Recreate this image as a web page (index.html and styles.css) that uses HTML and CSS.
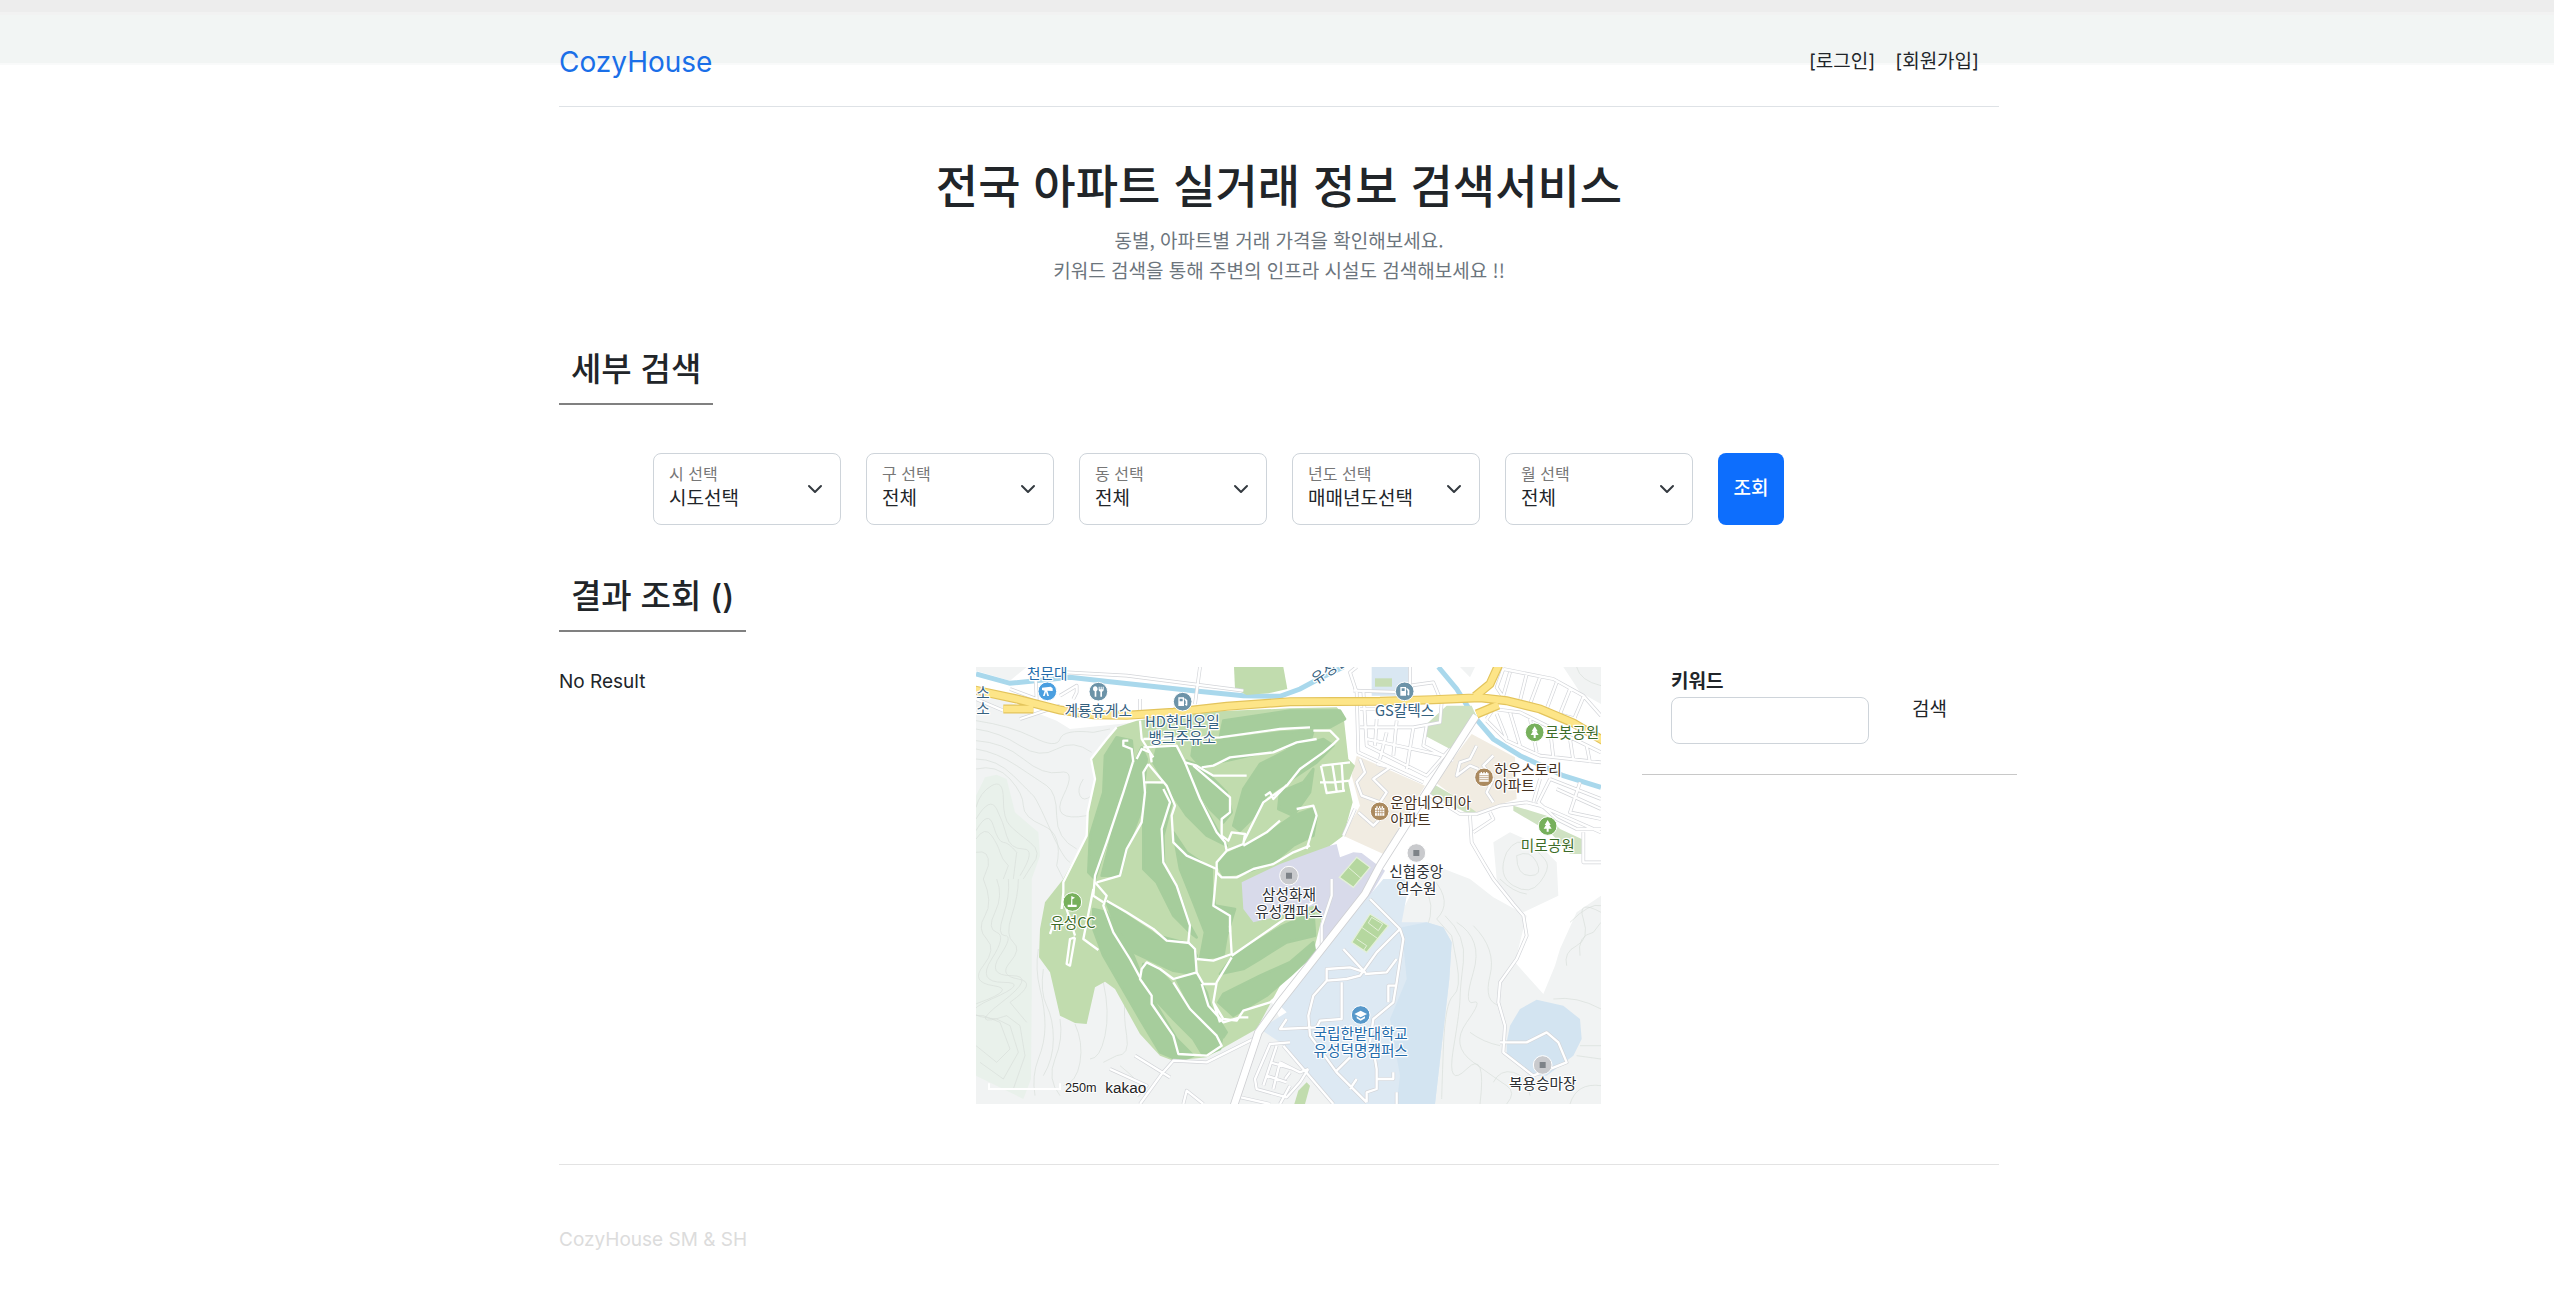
FILE: index.html
```html
<!DOCTYPE html>
<html lang="ko">
<head>
<meta charset="utf-8">
<meta name="viewport" content="width=device-width, initial-scale=1">
<title>CozyHouse</title>
<link rel="stylesheet" href="styles.css">
</head>
<body>
<div class="container">
  <header class="site-header">
    <a class="brand" href="#">CozyHouse</a>
    <nav class="site-nav">
      <a href="#">[로그인]</a>
      <a href="#">[회원가입]</a>
    </nav>
  </header>

  <section class="intro">
    <h1>전국 아파트 실거래 정보 검색서비스</h1>
    <p>동별, 아파트별 거래 가격을 확인해보세요.<br>키워드 검색을 통해 주변의 인프라 시설도 검색해보세요 !!</p>
  </section>

  <main>
    <h2 class="section-title">세부 검색</h2>
    <form class="filters">
      <div class="field"><label for="sido">시 선택</label><select id="sido"><option>시도선택</option></select></div>
      <div class="field"><label for="gugun">구 선택</label><select id="gugun"><option>전체</option></select></div>
      <div class="field"><label for="dong">동 선택</label><select id="dong"><option>전체</option></select></div>
      <div class="field"><label for="year">년도 선택</label><select id="year"><option>매매년도선택</option></select></div>
      <div class="field"><label for="month">월 선택</label><select id="month"><option>전체</option></select></div>
      <button class="btn-primary" type="button">조회</button>
    </form>

    <h2 class="section-title">결과 조회 ()</h2>
    <div class="results">
      <p class="result-list">No Result</p>

      <svg class="map" viewBox="48 54 1875 1311" role="img" aria-label="지도">
        <rect x="48" y="54" width="1875" height="1311" fill="#f1f3f3"/>
        <path fill="#e9f1eb" d="M48 440L75 385L110 377L140 390L165 490L235 550L240 620L215 690L215 1050L213 1290L190 1350L48 1280Z"/>
        <path fill="#fff" d="M48 54H1923V740L1850 790L1800 900L1785 950L1750 1035L1665 940L1700 800L1600 745L1530 690L1400 640L1330 780L960 1110L530 220L330 240L290 215L48 120Z"/>
        <path fill="#f1f3f3" d="M48 54H200L150 95L48 65ZM1500 54H1545L1530 85ZM1810 54H1923V165L1860 130ZM1600 580L1650 550L1740 590L1790 640L1795 740L1690 790L1640 750L1610 690Z"/>

        <g class="contour">
          <path d="M48 215Q150 230 220 265T300 270T400 250L450 240M48 240Q120 250 180 290T290 300T395 310M48 275Q130 280 190 330T300 370T310 440T380 500M48 300Q110 310 170 350T260 410T290 500T350 600M48 330Q110 330 160 380T220 440T270 540T330 640M48 360Q110 345 150 390T190 470T250 530T290 650L310 690M48 475Q60 430 95 410T130 450T150 530T210 580T215 650L190 690M48 510Q90 440 110 480T140 560T190 600T180 680M48 545Q85 480 100 530T130 580T170 610L160 690M48 570Q75 530 95 560T120 610T145 650L130 690M48 610Q90 600 85 650L70 690M370 390Q350 420 360 440T395 440"/>
          <path d="M70 690Q100 760 75 800T80 870T70 950T100 1010T60 1060T70 1100L120 1120L150 1200L110 1240L48 1190M110 690Q130 740 105 790T110 850T95 930T130 1000T95 1050T110 1110L150 1130L175 1210L130 1290L60 1240M145 690Q150 740 130 800T135 860T120 920T155 980T125 1060T140 1100L180 1130L195 1220L160 1320M175 690Q175 740 155 800T160 880T150 940T175 990T150 1060L200 1120M235 900Q225 960 240 1020T255 1130T235 1230T225 1340M250 960Q240 1030 260 1070T280 1170T250 1280M300 1110Q310 1170 285 1230T300 1340M345 1125Q370 1180 360 1240T310 1310M430 1000Q450 1090 435 1160T390 1230M495 1050Q490 1100 500 1160T470 1220L430 1240M480 1250Q530 1290 560 1330"/>
          <path d="M1390 715Q1430 760 1400 840M1420 690Q1480 760 1430 810L1475 860T1490 940T1480 1040T1450 1200T1445 1350M1455 800Q1520 860 1510 940T1500 1050T1480 1200T1520 1260T1560 1365M1490 820Q1570 870 1540 970T1540 1060T1520 1120T1540 1240T1640 1310T1640 1365M1540 830Q1610 900 1590 980T1620 1070M1530 1150Q1570 1180 1620 1190M1600 1300Q1620 1260 1660 1270T1710 1340M1830 820Q1890 760 1923 770M1820 950Q1810 910 1850 890T1870 810T1923 790M1860 920Q1850 860 1900 850L1923 820M1780 1050Q1850 1040 1923 1080M1860 1190L1923 1190M1850 1220L1923 1230M1640 610Q1670 560 1710 590T1760 640T1740 700T1660 710T1640 610M1670 620Q1710 600 1730 640T1710 680T1670 620M1850 54Q1860 95 1923 110M1620 690Q1660 730 1700 735M1830 1365Q1850 1300 1923 1310"/>
        </g>

        <!-- water -->
        <g class="river">
          <path d="M48 75L150 103L330 85L450 98L700 125L850 140L960 142L1020 120L1080 88L1150 54"/>
          <path d="M1435 54L1490 120L1540 200L1600 270L1680 320L1810 380L1923 415"/>
        </g>

        <!-- land use -->
        <path fill="#c1dcae" d="M822 54H970L982 120L925 133L860 138L825 120Z"/>
        <path fill="#d9e7f2" d="M1235 54H1350V140H1235Z"/>
        <path fill="#c7ddb5" d="M1245 88H1296V113H1245Z"/>
        <path fill="#cfe2c2" d="M1460 170H1535L1550 205L1470 300L1395 260L1400 225ZM1420 405L1560 485L1530 497L1400 430ZM1660 470L1760 500L1800 540L1865 570L1865 615H1830L1770 550L1660 485Z"/>
        <path fill="#f1ece2" d="M1190 320L1395 410L1340 500L1270 615L1150 560L1200 470L1175 380ZM1535 255L1665 325L1670 450L1550 490L1425 400Z"/>
        <path fill="#c1dcae" d="M530 215L700 190L990 178L1130 175L1150 195L1165 330L1185 350L1165 400L1178 460L1150 560L1110 590L1090 790L1065 890L960 1010L890 1140L740 1225L640 1235L600 1220L540 1155L465 1020L435 998L405 1015L380 1125L345 1122L300 1100L270 970L237 925L240 840L255 760L310 690L380 560L383 490L405 390L390 330L440 270L470 235Z"/>
        <g class="fairway">
          <path d="M470 265L515 275L520 330L480 430L440 580L405 690L385 670L390 560L430 430L435 320Z"/>
          <path d="M545 295L560 330L545 480L500 600L480 680H425L450 580L490 420Z"/>
          <path d="M565 405L610 410L635 460L610 560L612 650L650 710L690 830L710 865L690 850L640 800L590 700L550 660L550 520Z"/>
          <path d="M590 300L640 290L670 340L710 430L770 540L800 590L740 560L680 500L640 440L580 340Z"/>
          <path d="M680 335L720 350L800 430L815 490L790 520L750 480L710 420Z"/>
          <path d="M790 215L990 185L1140 185L1155 210L1110 235L960 240L780 262Z"/>
          <path d="M700 285L800 270L960 250L1060 245L1050 280L960 300L800 335L720 350L695 320Z"/>
          <path d="M990 300L900 345L850 420L820 530L840 545L875 510L920 440L980 400L1070 340L1120 290L1090 270Z"/>
          <path d="M960 430L1030 400L1060 360L1050 430L1000 500L955 480ZM790 620L900 570L1000 500L1055 480L1070 500L1060 560L1000 590L940 640L860 670L790 680L775 650Z"/>
          <path d="M640 550L680 610L755 660V720L765 770L825 780L800 860L790 920L720 930L735 850L700 760L660 660Z"/>
          <path d="M400 780L440 790L520 920L560 1020L650 1170L700 1220L660 1235L600 1210L540 1110L430 920L400 840Z"/>
          <path d="M440 760L500 800L590 860L690 885L710 920L700 975L640 965L520 910L470 840Z"/>
          <path d="M550 945L590 955L640 1010L700 1090L785 1170L780 1200L730 1220L700 1170L640 1110L575 1040L545 980Z"/>
          <path d="M650 990L710 980L740 1030L750 1070L800 1150L790 1165L740 1130L690 1070Z"/>
          <path d="M780 975L820 920L960 835L1060 790L1065 860L980 880L900 930L850 960ZM790 1035L900 980L990 940L1060 880L1065 910L990 980L920 1040L820 1100L775 1060Z"/>
        </g>
        <path fill="#d8daea" d="M1110 590L1130 585L1140 625L1180 610L1205 612L1275 665L1230 740L1090 890L1085 800L1060 770L960 800L880 820L850 780L845 700L960 645Z"/>
        <path fill="#dde9f3" d="M1270 690H1350L1325 820L1400 820L1450 835L1475 880L1468 990L1445 1190L1425 1365H1120L960 1180L900 1140L980 1090L960 1070L1160 820Z"/>
        <path fill="#d3e4f1" d="M1325 835L1400 820L1450 835L1475 880L1468 990L1445 1190L1425 1365H1310L1320 1280L1290 1110L1340 990ZM1640 1180L1650 1130L1680 1080L1730 1052L1810 1070L1860 1110L1865 1170L1840 1220L1760 1280H1710L1640 1220Z"/>
        <path fill="#b5d79f" stroke="#e3f0d8" stroke-width="4" d="M1190 625L1230 655L1180 715L1138 685ZM1230 795L1285 830L1220 910L1175 880Z"/>
        <path fill="none" stroke="#e3f0d8" stroke-width="3" d="M1165 655L1205 690M1205 835L1255 870M1235 805L1268 825L1255 845L1225 822ZM1190 870L1220 890L1210 905"/>
        <path fill="#c1dcae" d="M1040 1300L1050 1310L1035 1365H1003L1015 1325Z"/>

        <!-- golf course paths -->
        <g class="trail">
          <path d="M470 235L440 270L393 330L405 390L383 490L380 560L310 700V730L305 780"/>
          <path d="M520 340L515 300L490 290V275H505M540 215L545 270L570 310L575 340M530 330L545 300L570 310L580 325M550 270L780 265L960 240L1050 235M550 295L650 290L675 340L710 350L760 380H860M520 335L490 430L440 580L405 680L400 740L430 760M565 345L550 370L555 430L545 520L500 600L480 680L410 700M555 400H610M565 345L620 410L645 470L635 500L640 580L680 620L770 660L760 770L810 800V850M610 420L630 460L605 540L610 640L650 710L690 830L685 880L705 900L710 970L640 990L600 960L560 940L545 960L540 990L575 1040V1065L640 1160L655 1215L740 1220L785 1190L770 1160L690 1080L640 1000"/>
          <path d="M675 340L720 450L770 550L795 580L800 605L770 640V670L785 685H830L880 660L940 645L1000 610L1050 590M700 350L770 410L810 445V490L785 510V560L805 575L815 550L855 555L850 585L800 605M725 355L760 350L810 325L940 310L1010 280L1070 270M850 580L910 460L980 410L1020 360L1090 310L1120 285L1135 270L1110 245L1060 245M850 590L920 550L960 515M915 440L930 430L940 450L980 408"/>
          <path d="M405 700L440 740L430 770L460 850L510 930L540 985M440 755L500 790L580 840L620 875L690 882M400 720L370 870L415 903M345 865L330 950L320 945L330 870L345 865M345 860L310 750M270 855L290 800M815 920L960 820L1060 760M710 930L760 935L815 915L810 830M815 925L770 1000L760 1060L780 1120M710 970L730 1005H770M725 1005L745 1070L790 1120L840 1105H865M760 1060L790 1110L830 1115L850 1085L930 1060L990 1010L1080 900"/>
          <path d="M1080 400L1120 400L1170 395M1085 350L1170 340M1083 350L1100 432L1155 425M1117 345L1130 428M1145 342L1150 425M1010 480L1060 470L1070 500L1040 600"/>
        </g>

        <!-- streets -->
        <g class="casing">
          <path id="st1" d="M150 120L230 150L225 54M180 210L300 170M48 150L130 185M720 54L705 165M320 70L500 80L850 125M300 140L350 110V130L340 150M540 150V200"/>
          <path id="st2" d="M1190 54L1170 70L1190 130L1195 310L1390 400M1210 125L1220 290L1400 380L1470 300M1180 125L1350 130M1350 54V110L1420 100L1445 160L1440 220L1360 235L1200 235M1250 210L1245 290M1310 215L1300 320M1400 230L1390 290L1480 335M1360 235L1340 360M1220 270L1450 320M1280 250L1260 330M1200 180H1260"/>
          <path id="st3" d="M1630 60L1610 115L1640 160L1740 180L1850 210M1630 60L1780 90L1870 140L1923 200M1580 210L1600 180L1680 190L1780 240L1923 310M1580 215L1640 275L1740 320L1923 340M1650 70L1630 140M1700 75L1680 155M1740 85L1710 165M1790 100L1760 180M1830 120L1800 195M1870 145L1840 215M1610 195L1640 270M1650 190L1680 290M1710 210L1730 310M1770 240L1780 325M1830 270L1840 335M1880 290L1890 340M1770 390L1735 460L1790 510L1850 540H1923M1770 390L1923 450M1790 420L1923 480M1860 400L1830 490L1923 510M1740 470L1923 550M1870 550V640H1923M1740 390L1720 460"/>
          <path id="st4" d="M1395 430L1500 495L1550 495L1620 470L1700 460L1740 470M1530 500L1535 580L1570 640L1600 690L1660 765L1690 800L1700 860L1670 930L1620 1000L1615 1060L1635 1130L1630 1210L1720 1280L1820 1240L1795 1180L1760 1150L1700 1180H1620M1540 550L1600 510L1590 490"/>
          <path id="st5" d="M1200 330L1215 370L1190 400L1205 440L1260 460L1280 430L1240 390L1290 355L1250 345M1185 480L1150 560M1195 490L1240 530L1270 500M1550 290L1530 330L1500 340L1490 380L1530 350L1555 360M1600 320L1570 350L1600 390L1580 430L1600 460"/>
          <path id="st6" d="M1230 750L1320 840L1330 870L1310 1000L1300 1060L1240 1110L1230 1180M1320 840L1250 910L1200 980L1160 990L1100 995L1060 1040L1045 1100L1050 1160L1130 1270L1220 1360M1100 995V960L1170 955L1215 970L1150 900M1215 975L1280 970L1310 930M1145 1000V1110L1080 1115L1070 1135L960 1140L980 1110M1310 1010H1285V1060M1240 1200L1250 1260V1320L1220 1330V1360M1250 1290H1300V1270M1310 1330V1365M1130 1265L1170 1225M1170 1320L1190 1290M970 1190L1120 1365M1115 690V740L1085 830L1085 900"/>
          <path id="st7" d="M890 1165L830 1195L740 1240L640 1235L605 1275L540 1365M525 1220L630 1285M450 1260L560 1310L530 1340M990 1180L930 1185L885 1290L890 1320L980 1345L1020 1300L1045 1260M950 1190L910 1310M930 1240L1000 1260M920 1280L980 1300M960 1240L940 1320M670 1365L680 1325L730 1365M820 1340L930 1365M960 1240L1020 1270L1045 1260M990 1310L960 1365M990 1270L975 1290"/>
        </g>
        <g class="street">
          <use href="#st1"/><use href="#st2"/><use href="#st3"/><use href="#st4"/><use href="#st5"/><use href="#st6"/><use href="#st7"/>
        </g>
        <path class="avenue-edge" d="M1548 200L1400 430L1260 650L1215 735L960 1060L895 1150L820 1375"/>
        <path class="avenue" d="M1548 200L1400 430L1260 650L1215 735L960 1060L895 1150L820 1375"/>
        <g class="highway-edge"><path id="hw" d="M40 122L170 150L300 183L400 197L500 199L640 190L800 172L990 158L1260 157L1420 152L1560 146L1640 155L1740 180L1840 222L1930 275M130 180H220M1616 48L1590 105L1545 142M1615 168L1550 195"/></g>
        <g class="highway"><use href="#hw"/></g>

        <!-- places -->
        <g class="pin">
          <circle cx="262" cy="127" r="28" fill="#4a9fe0"/>
          <circle cx="415" cy="128" r="28" fill="#6c93a8"/>
          <circle cx="668" cy="158" r="28" fill="#6c93a8"/>
          <circle cx="1334" cy="127" r="28" fill="#6c93a8"/>
          <circle cx="1724" cy="250" r="28" fill="#77b05c"/>
          <circle cx="1763" cy="531" r="28" fill="#77b05c"/>
          <circle cx="337" cy="759" r="28" fill="#77b05c"/>
          <circle cx="1572" cy="385" r="28" fill="#ab8a5f"/>
          <circle cx="1259" cy="487" r="28" fill="#ab8a5f"/>
          <circle cx="1369" cy="612" r="28" fill="#c9cacd"/>
          <circle cx="987" cy="680" r="28" fill="#c9cacd"/>
          <circle cx="1748" cy="1248" r="28" fill="#c9cacd"/>
          <circle cx="1202" cy="1098" r="28" fill="#5798ca"/>
        </g>
        <g fill="#fff">
          <path d="M246 116L272 113L278 118V126L262 125L267 141H262L258 128L254 141H249L254 125L246 123Z"/>
          <path d="M399 121a7 8 0 1 1 10 6V143H404V127Q399 126 399 121ZM416 113H419V121H422V113H425V121H428V113H431V123Q431 127 426 128V143H421V128Q416 127 416 123Z"/>
          <path id="fuel" fill-rule="evenodd" d="M655 145H672V171H655ZM659 149V157H668V149ZM674 147L682 154V168Q682 171 678 170L674 165H677V157L673 151Z"/>
          <use href="#fuel" x="666" y="-31"/>
          <path id="tree" d="M1724 232L1733 247H1729L1736 258H1727V267H1721V258H1712L1719 247H1715Z"/>
          <use href="#tree" x="39" y="281"/>
          <path d="M334 741L345 746L337 751V767H350V774H323V767H333Z"/>
          <path d="M1558 373H1586V398H1558ZM1562 369H1566V373H1562ZM1570 369H1574V373H1570ZM1578 369H1582V373H1578Z"/>
          <path d="M1245 477H1273V500H1245ZM1249 472H1253V477H1249ZM1257 472H1261V477H1257ZM1265 472H1269V477H1265Z"/>
          <path d="M1202 1085L1221 1095L1202 1105L1183 1095ZM1190 1102L1202 1109L1215 1102V1108L1202 1115L1190 1108Z"/>
        </g>
        <path fill="none" stroke="#ab8a5f" stroke-width="2" d="M1558 380H1586M1558 386H1586M1558 392H1586M1245 484H1273M1245 491H1273M1252 477V500M1259 477V500M1266 477V500"/>
        <path fill="#7e8388" d="M1360 603H1378V621H1360ZM978 671H996V689H978ZM1739 1239H1757V1257H1739Z"/>

        <g class="place">
          <g class="place-service">
            <text x="49" y="146">소</text>
            <text x="49" y="194">소</text>
            <text x="415" y="202" text-anchor="middle">계룡휴게소</text>
            <text x="667" y="233" text-anchor="middle">HD현대오일</text>
            <text x="667" y="281" text-anchor="middle">뱅크주유소</text>
            <text x="1334" y="200" text-anchor="middle">GS칼텍스</text>
            <text x="1067" y="107" transform="rotate(-33 1067 107)">유성천</text>
          </g>
          <g class="place-school">
            <text x="262" y="91" text-anchor="middle">천문대</text>
            <text x="1202" y="1170" text-anchor="middle">국립한밭대학교</text>
            <text x="1202" y="1220" text-anchor="middle">유성덕명캠퍼스</text>
          </g>
          <g class="place-park">
            <text x="1756" y="266">로봇공원</text>
            <text x="1763" y="606" text-anchor="middle">미로공원</text>
            <text x="339" y="836" text-anchor="middle">유성CC</text>
          </g>
          <g class="place-home">
            <text x="1603" y="378">하우스토리</text>
            <text x="1603" y="426">아파트</text>
            <text x="1291" y="478">운암네오미아</text>
            <text x="1291" y="527">아파트</text>
          </g>
          <g class="place-etc">
            <text x="1369" y="685" text-anchor="middle">신협중앙</text>
            <text x="1369" y="735" text-anchor="middle">연수원</text>
            <text x="987" y="753" text-anchor="middle">삼성화재</text>
            <text x="987" y="803" text-anchor="middle">유성캠퍼스</text>
            <text x="1748" y="1320" text-anchor="middle">복용승마장</text>
          </g>
        </g>
        <path fill="none" stroke="#fff" stroke-width="6" d="M87 1303V1320H300V1303"/>
        <text class="scale-text" x="315" y="1329">250m</text>
        <text class="kakao-text" x="436" y="1331">kakao</text>
      </svg>

      <form class="keyword">
        <div class="keyword-field">
          <label for="keyword">키워드</label>
          <input id="keyword" type="text">
        </div>
        <button class="btn-plain" type="button">검색</button>
      </form>
    </div>
  </main>

  <footer class="site-footer">CozyHouse SM &amp; SH</footer>
</div>
</body>
</html>
```
FILE: styles.css
```css
*,
*::before,
*::after {
  box-sizing: border-box;
}

body {
  margin: 0;
  padding: 0 0 0 4px;
  background: #fff linear-gradient(#ededed 0 12px, #f2f2f2 12px 15px, #f2f5f4 15px 63px, #f9fafa 63px 65px, #fff 65px) no-repeat 0 0 / 100% 65px;
  color: #212529;
  font-family: Inter, "Noto Sans CJK KR", sans-serif;
  font-size: 19px;
  line-height: 30px;
}

h1,
h2,
p {
  margin: 0;
}

a {
  color: inherit;
  text-decoration: none;
}

button,
input,
select {
  font: inherit;
  color: inherit;
}

.container {
  max-width: 1440px;
  margin: 0 auto;
}

.site-header {
  display: flex;
  justify-content: space-between;
  align-items: flex-start;
  padding: 32px 20px 14px 0;
  border-bottom: 1px solid #dee2e6;
}

.brand {
  color: #1a6fe8;
  font-size: 28px;
  line-height: 60px;
}

.site-nav {
  display: flex;
  gap: 20px;
  padding-top: 15px;
}

.intro {
  padding: 44px 0 60px;
  font-family: "Noto Sans CJK KR", sans-serif;
  text-align: center;
}

.intro h1 {
  margin-bottom: 10px;
  font-size: 46px;
  font-weight: 500;
  line-height: 64px;
}

.intro p {
  color: #6c757d;
}

.section-title {
  width: fit-content;
  padding: 0 12px 10px;
  border-bottom: 2px solid #808080;
  font-size: 33px;
  font-weight: 500;
  line-height: 48px;
}

.filters {
  display: flex;
  gap: 25px;
  margin: 48px 0 47px;
  padding-left: 94px;
}

.field {
  display: grid;
  width: 188px;
}

.field label,
.field select {
  grid-area: 1 / 1;
}

.field label {
  z-index: 1;
  height: 30px;
  padding: 6px 0 0 16px;
  color: #777;
  font-size: 16px;
  pointer-events: none;
}

.field select {
  height: 72px;
  padding: 20px 32px 0 15px;
  border: 1px solid #ced4da;
  border-radius: 8px;
  appearance: none;
  background: #fff url("data:image/svg+xml,%3Csvg xmlns='http://www.w3.org/2000/svg' viewBox='0 0 16 16'%3E%3Cpath fill='none' stroke='%23343a40' stroke-linecap='round' stroke-linejoin='round' stroke-width='2' d='m2 5 6 6 6-6'/%3E%3C/svg%3E") no-repeat right 17px center / 16px 16px;
}

.btn-primary {
  width: 66px;
  padding: 0;
  border: 0;
  border-radius: 8px;
  background: #0d6efd;
  color: #fff;
  font-weight: 500;
}

.results {
  display: grid;
  grid-template-columns: 417fr 625fr 398fr;
  align-items: start;
  margin-top: 35px;
}

.map {
  display: block;
  width: 100%;
}

.keyword {
  display: flex;
  gap: 43px;
  height: 108px;
  margin: 0 -18px 0 41px;
  padding-left: 29px;
  border-bottom: 1px solid #c8c8c8;
}

.keyword-field {
  display: flex;
  flex-direction: column;
  width: 198px;
}

.keyword label {
  font-weight: 700;
}

.keyword input {
  width: 100%;
  height: 47px;
  border: 1px solid #ced4da;
  border-radius: 8px;
}

.btn-plain {
  align-self: flex-start;
  margin-top: 28px;
  padding: 0;
  border: 0;
  background: none;
}

.site-footer {
  margin-top: 60px;
  padding: 60px 0 45px;
  border-top: 1px solid #e3e3e3;
  color: #dcdcdc;
}

/* map layers */
.contour {
  fill: none;
  stroke: #d8ded9;
  stroke-width: 2;
}

.river {
  fill: none;
  stroke: #a9d8ec;
  stroke-width: 15;
}

.fairway {
  fill: #a6cd9c;
  stroke: #a6cd9c;
  stroke-width: 8;
  stroke-linejoin: round;
}

.trail,
.street {
  fill: none;
  stroke: #fff;
  stroke-width: 7;
  stroke-linejoin: round;
}

.casing {
  fill: none;
  stroke: #d3d5d9;
  stroke-width: 11;
  stroke-linejoin: round;
}

.avenue-edge {
  fill: none;
  stroke: #cfd0d3;
  stroke-width: 25;
}

.avenue {
  fill: none;
  stroke: #fff;
  stroke-width: 20;
}

.highway-edge {
  fill: none;
  stroke: #e3c45c;
  stroke-width: 27;
}

.highway {
  fill: none;
  stroke: #fde588;
  stroke-width: 20;
}

.pin {
  stroke: #fff;
  stroke-width: 3;
}

.place {
  font-family: "Noto Sans CJK KR", sans-serif;
  font-size: 44px;
  font-weight: 400;
  paint-order: stroke;
  stroke: #fff;
  stroke-width: 7;
  stroke-linejoin: round;
}

.place-service {
  fill: #35617f;
}

.place-school {
  fill: #236bab;
}

.place-park {
  fill: #3c6c28;
}

.place-home {
  fill: #44311f;
}

.place-etc {
  fill: #2c3035;
}

.scale-text,
.kakao-text {
  font-family: "Liberation Sans", sans-serif;
  font-size: 38px;
  fill: #222;
  paint-order: stroke;
  stroke: #fff;
  stroke-width: 5;
}

.kakao-text {
  font-size: 46px;
}
```
